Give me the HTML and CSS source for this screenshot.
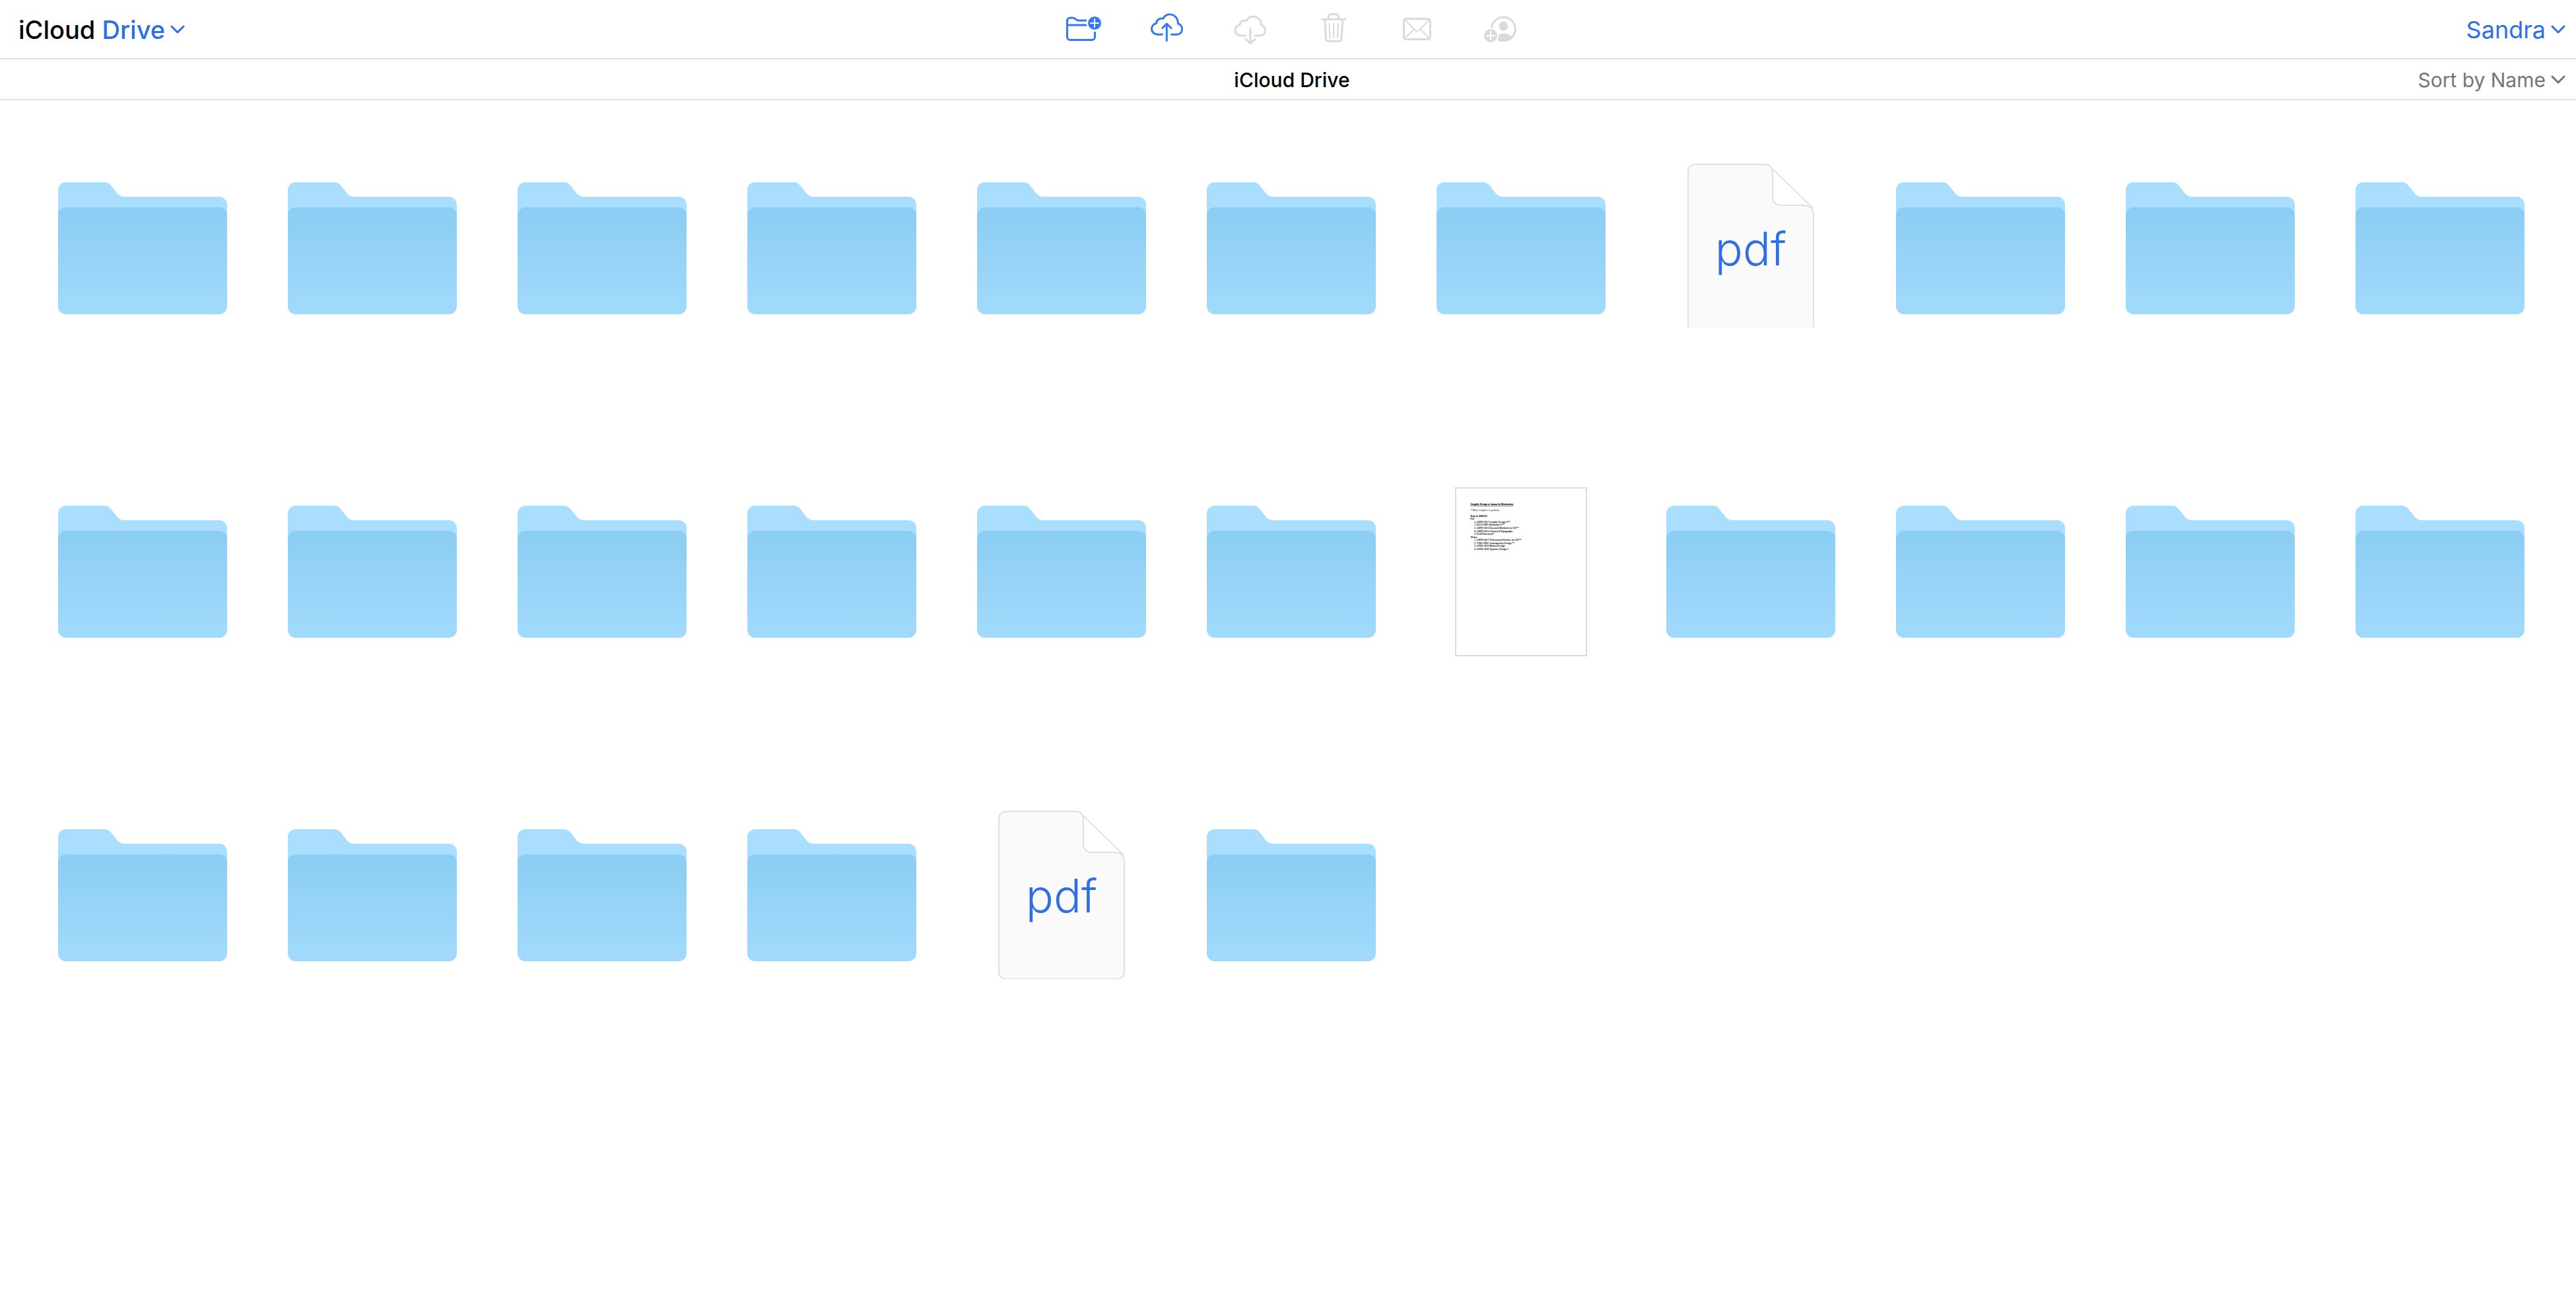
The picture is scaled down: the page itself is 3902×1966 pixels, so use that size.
FILE: index.html
```html
<!DOCTYPE html>
<html lang="en">
<head>
<meta charset="utf-8">
<title>iCloud Drive</title>
<link rel="stylesheet" href="styles.css">
</head>
<body>
<svg class="sprite" aria-hidden="true">
  <defs>
    <linearGradient id="front" x1="0" y1="0" x2="0" y2="1">
      <stop offset="0" stop-color="#8ccdf3"/>
      <stop offset="1" stop-color="#a1dafc"/>
    </linearGradient>
    <symbol id="folder" viewBox="0 0 256 200">
      <path fill="#a9deff" d="M0 12C0 5 5 0 12 0H70C75 0 78 2 81 6L89 16C92 20 96 22 102 22H244C251 22 256 27 256 34V100H0Z"/>
      <rect fill="url(#front)" y="38" width="256" height="162" rx="12"/>
    </symbol>
    <symbol id="file" viewBox="0 0 256 256">
      <path fill="#fff" stroke="#e3e3e3" stroke-width="2" d="M155 2L221 66H161Z"/>
      <path fill="#fafafa" stroke="#e0e0e0" stroke-width="2" d="M33 13C33 5 37 1 45 1H149C157 1 161 6 161 14V50C161 58 166 63 174 63H208C218 63 223 68 223 78V243C223 251 219 255 211 255H45C37 255 33 251 33 243Z"/>
    </symbol>
    <symbol id="chevron" viewBox="0 0 22 14">
      <path fill="none" stroke="currentColor" stroke-width="3" stroke-linecap="round" stroke-linejoin="round" d="M2 2L11 11L20 2"/>
    </symbol>
  </defs>
</svg>

<header class="bar toolbar">
  <button class="app" type="button"><span class="brand">iCloud</span> Drive<svg class="chevron"><use href="#chevron"/></svg></button>
  <nav class="tools" aria-label="Actions">
    <button type="button" aria-label="New folder">
      <svg class="icon" viewBox="0 0 64 60">
        <path d="M36 17H24c-2.200 0-3.500-.8-5-2.200S16.200 13 14.200 13H11a4.500 4.500 0 0 0-4.500 4.500V42a4.500 4.500 0 0 0 4.500 4.500h33a4.500 4.500 0 0 0 4.500-4.500v-8M6.500 24H36"/>
        <circle class="solid" cx="48" cy="21" r="10"/>
        <path class="knock" d="M48 15v12M42 21h12"/>
      </svg>
    </button>
    <button type="button" aria-label="Upload">
      <svg class="icon" viewBox="0 0 64 60">
        <path d="M25.700 38.300H18C12.500 38.300 8.500 34.500 8.500 29.800C8.500 25.600 11.500 22.300 15.600 21.300C15.600 16.500 20 13 25.700 14.200C28 10 31.800 7.800 35.800 7.800C43 7.800 48.800 13.500 48.300 21.800C52 22.800 54.600 26.200 54.600 30.200C54.600 34.800 51.200 38.300 46.800 38.300H37.300"/>
        <path d="M31.300 47.500V22M24.700 28.500L31.300 22L38.200 28.500" stroke-linecap="round"/>
      </svg>
    </button>
    <button type="button" aria-label="Download" disabled>
      <svg class="icon" viewBox="0 0 64 60">
        <path d="M26 40H18.300C12.800 40 9 36.600 9 32C9 27.800 12 24.600 16 23.600C16 19 20.300 16 26 17.200C28.300 13 32 11 36 11C43 11 48.800 16.500 48.300 24C52 25 54.600 28.200 54.600 32.200C54.600 36.600 51.200 40 46.800 40H37.800"/>
        <path d="M32 28.700V52M25 45.500L32 52L39 45.500" stroke-linecap="round"/>
      </svg>
    </button>
    <button type="button" aria-label="Delete" disabled>
      <svg class="icon" viewBox="0 0 64 60" stroke-linecap="round">
        <path d="M15 15.300H49.600M24.500 15V11a3.500 3.500 0 0 1 3.500-3.500h8a3.500 3.500 0 0 1 3.500 3.500V15M18.800 16L20.500 45a3.500 3.500 0 0 0 3.500 3.500h16.500a3.500 3.500 0 0 0 3.500-3.500L45.800 16"/>
        <path class="fine" d="M25.500 22L26.300 43M32.200 22V43M38.900 22L38.100 43"/>
      </svg>
    </button>
    <button type="button" aria-label="Send by mail" disabled>
      <svg class="icon" viewBox="0 0 64 60">
        <rect x="12.500" y="14.500" width="40" height="31" rx="3.500"/>
        <path class="fine" d="M13.500 15.500L29.500 31.500Q32.500 35 35.500 31.500L51.500 15.500M13.500 44.500L27 31M51.500 44.500L38 31"/>
      </svg>
    </button>
    <button type="button" aria-label="Share" disabled>
      <svg class="icon" viewBox="0 0 64 60">
        <clipPath id="ring"><circle cx="37.300" cy="30" r="18.500"/></clipPath>
        <circle cx="37.300" cy="30" r="18"/>
        <ellipse class="solid" cx="37.300" cy="25.700" rx="6.700" ry="7.300"/>
        <ellipse class="solid" cx="37.300" cy="46.700" rx="15" ry="10" clip-path="url(#ring)"/>
        <circle class="gap" cx="18" cy="40" r="12.500"/>
        <circle class="solid" cx="18" cy="40" r="10"/>
        <path class="knock" d="M18 34v12M12 40h12"/>
      </svg>
    </button>
  </nav>
  <button class="account" type="button">Sandra<svg class="chevron"><use href="#chevron"/></svg></button>
</header>

<div class="bar pathbar">
  <h1>iCloud Drive</h1>
  <button class="sort" type="button">Sort by Name<svg class="chevron"><use href="#chevron"/></svg></button>
</div>

<main>
  <ul class="files">
    <li><button type="button" aria-label="Folder"><svg class="folder"><use href="#folder"/></svg></button></li>
    <li><button type="button" aria-label="Folder"><svg class="folder"><use href="#folder"/></svg></button></li>
    <li><button type="button" aria-label="Folder"><svg class="folder"><use href="#folder"/></svg></button></li>
    <li><button type="button" aria-label="Folder"><svg class="folder"><use href="#folder"/></svg></button></li>
    <li><button type="button" aria-label="Folder"><svg class="folder"><use href="#folder"/></svg></button></li>
    <li><button type="button" aria-label="Folder"><svg class="folder"><use href="#folder"/></svg></button></li>
    <li><button type="button" aria-label="Folder"><svg class="folder"><use href="#folder"/></svg></button></li>
    <li><button type="button"><svg class="file cut" viewBox="0 0 256 256"><use href="#file"/><text x="128" y="154">pdf</text></svg></button></li>
    <li><button type="button" aria-label="Folder"><svg class="folder"><use href="#folder"/></svg></button></li>
    <li><button type="button" aria-label="Folder"><svg class="folder"><use href="#folder"/></svg></button></li>
    <li><button type="button" aria-label="Folder"><svg class="folder"><use href="#folder"/></svg></button></li>

    <li><button type="button" aria-label="Folder"><svg class="folder"><use href="#folder"/></svg></button></li>
    <li><button type="button" aria-label="Folder"><svg class="folder"><use href="#folder"/></svg></button></li>
    <li><button type="button" aria-label="Folder"><svg class="folder"><use href="#folder"/></svg></button></li>
    <li><button type="button" aria-label="Folder"><svg class="folder"><use href="#folder"/></svg></button></li>
    <li><button type="button" aria-label="Folder"><svg class="folder"><use href="#folder"/></svg></button></li>
    <li><button type="button" aria-label="Folder"><svg class="folder"><use href="#folder"/></svg></button></li>
    <li><button type="button">
      <svg class="page" viewBox="0 0 612 787">
        <text class="strong line" x="66" y="78">Graphic Design w/ minor in Illustration</text>
        <text class="note" x="66" y="106">**Must complete to graduate</text>
        <text class="strong" x="66" y="134">Year 4: 2022/23</text>
        <text x="66" y="148">Fall</text>
        <text x="84" y="162">1. GRPH 3017 Graphic Design 3**</text>
        <text x="84" y="176">2. ILLU-3005 Illustration 3**</text>
        <text x="84" y="190">3. GRPH 3013 Research Methods for GD**</text>
        <text x="84" y="205">4. GRPH 3013 Advanced Typography</text>
        <text x="84" y="219">5. Field Placement*</text>
        <text x="66" y="233">Winter</text>
        <text x="84" y="247">1. GRPH 4017 Professional Practice for GD**</text>
        <text x="84" y="261">2. VISD-3003 Contemporary Design **</text>
        <text x="84" y="275">3. GDES 3010 Motion Design</text>
        <text x="84" y="290">4. GDES 3003 Typeface Design 1</text>
      </svg>
    </button></li>
    <li><button type="button" aria-label="Folder"><svg class="folder"><use href="#folder"/></svg></button></li>
    <li><button type="button" aria-label="Folder"><svg class="folder"><use href="#folder"/></svg></button></li>
    <li><button type="button" aria-label="Folder"><svg class="folder"><use href="#folder"/></svg></button></li>
    <li><button type="button" aria-label="Folder"><svg class="folder"><use href="#folder"/></svg></button></li>

    <li><button type="button" aria-label="Folder"><svg class="folder"><use href="#folder"/></svg></button></li>
    <li><button type="button" aria-label="Folder"><svg class="folder"><use href="#folder"/></svg></button></li>
    <li><button type="button" aria-label="Folder"><svg class="folder"><use href="#folder"/></svg></button></li>
    <li><button type="button" aria-label="Folder"><svg class="folder"><use href="#folder"/></svg></button></li>
    <li><button type="button"><svg class="file" viewBox="0 0 256 256"><use href="#file"/><text x="128" y="154">pdf</text></svg></button></li>
    <li><button type="button" aria-label="Folder"><svg class="folder"><use href="#folder"/></svg></button></li>
  </ul>
</main>
</body>
</html>
```
FILE: styles.css
```css
* {
  box-sizing: border-box;
}

body {
  margin: 0;
  background: #fff;
  color: #000;
  font-family: Inter, "Liberation Sans", sans-serif;
}

button {
  margin: 0;
  padding: 0;
  border: 0;
  background: none;
  color: inherit;
  font: inherit;
  cursor: pointer;
}

.sprite {
  display: block;
  width: 0;
  height: 0;
}

/* Top bars */

.bar {
  display: grid;
  grid-template-columns: 1fr auto 1fr;
  align-items: center;
  padding: 0 16px 0 28px;
  border-bottom: 2px solid #e0e0e0;
}

.toolbar {
  height: 90px;
}

.pathbar {
  height: 62px;
  font-size: 30px;
}

.chevron {
  width: 22px;
  height: 14px;
  margin-left: 8px;
}

.app,
.account,
.sort {
  display: flex;
  align-items: center;
  white-space: pre;
}

.app,
.account {
  padding-top: 2px;
  color: #2f6fe4;
}

.app {
  justify-self: start;
  font-size: 38px;
  font-weight: 500;
}

.brand {
  color: #000;
}

.account,
.sort {
  justify-self: end;
}

.account {
  font-size: 36px;
}

.pathbar h1 {
  grid-column: 2;
  margin: 0;
  padding-top: 2px;
  font-size: 30px;
  font-weight: 500;
}

.sort {
  padding-top: 2px;
  color: #757575;
}

.tools {
  display: flex;
}

.tools button {
  display: grid;
  place-items: center;
  width: 126px;
  height: 88px;
  color: #3478f6;
}

.tools button:disabled {
  color: #dadada;
}

.icon {
  width: 64px;
  height: 60px;
  fill: none;
  stroke: currentColor;
  stroke-width: 3px;
  stroke-linejoin: round;
}

.icon .solid {
  fill: currentColor;
  stroke: none;
}

.icon .gap {
  fill: #fff;
  stroke: none;
}

.icon .fine {
  stroke-width: 2px;
}

.icon .knock {
  stroke: #fff;
  stroke-width: 2px;
  stroke-linecap: round;
}

/* File grid */

.files {
  display: grid;
  grid-template-columns: repeat(auto-fill, 348px);
  grid-auto-rows: 490px;
  margin: 0;
  padding: 96px 32px 0 42px;
  list-style: none;
}

.files li {
  display: flex;
  justify-content: center;
  align-items: flex-start;
}

.files button {
  display: grid;
  place-items: center;
  width: 256px;
  height: 256px;
}

.folder {
  width: 256px;
  height: 200px;
}

.file {
  width: 256px;
  height: 256px;
  clip-path: inset(0 0 1px 0);
  fill: #2f6fe4;
  font-size: 70px;
  font-weight: 300;
  text-anchor: middle;
}

.cut {
  clip-path: inset(0 0 8px 0);
}

.page {
  width: 200px;
  height: 256px;
  border: 2px solid #dcdcdc;
  font-family: "Liberation Serif", serif;
  font-size: 12px;
  stroke: #000;
  stroke-width: 1px;
  stroke-opacity: 0.3;
}

.page .strong {
  font-weight: 700;
}

.page .line {
  text-decoration: underline;
}

.page .note {
  fill: #5c6b33;
  stroke: #5c6b33;
}
```
